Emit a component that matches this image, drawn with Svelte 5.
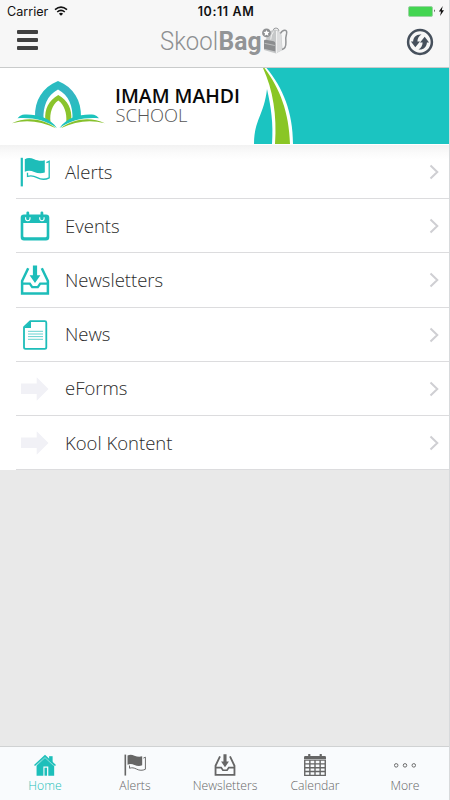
<script>
  const items = [
    { label: 'Alerts', icon: 'flag' },
    { label: 'Events', icon: 'event' },
    { label: 'Newsletters', icon: 'inbox' },
    { label: 'News', icon: 'page' },
    { label: 'eForms', icon: 'arrow' },
    { label: 'Kool Kontent', icon: 'arrow' }
  ];

  const tabs = [
    { label: 'Home', icon: 'home' },
    { label: 'Alerts', icon: 'flag' },
    { label: 'Newsletters', icon: 'inbox' },
    { label: 'Calendar', icon: 'calendar' },
    { label: 'More', icon: 'more' }
  ];

  let active = $state('Home');
</script>

{#snippet icon(name)}
  <svg class="icon" viewBox="0 0 30 30" aria-hidden="true">
    {#if name === 'flag'}
      <path d="M.7 .8h2.200v28.600H.7z" fill="currentColor" />
      <path d="M4.800 2.200c3-1.700 6-1.400 9.400.1 3.600 1.500 7 2 10.600.9v12.300c-3.600 1.200-7 .9-10.600-.6-3.300-1.400-6.400-1.500-9.400-.2z" fill="currentColor" />
      <path d="M26.400 5.600l2.800-1.300v16.500c-4 2-8.200 1.800-12-.2-3.400-1.800-6.500-2.300-9.700-1.200v-3.700" fill="none" stroke="currentColor" stroke-width="1.300" />
    {:else if name === 'event'}
      <path fill-rule="evenodd" d="M4 3.500h22q3.300 0 3.300 3.300v19.500q0 3.300-3.300 3.300H4q-3.300 0-3.300-3.300V6.800Q.7 3.500 4 3.500zM3.300 12v13q0 1.300 1.300 1.300h20.800q1.300 0 1.300-1.300V12z" fill="currentColor" />
      <path d="M7.800 1.800v6M21.900 1.800v6" stroke="currentColor" stroke-width="2.800" stroke-linecap="round" />
      <path d="M5.600 6.200v1.300a2.200 2.200 0 0 0 4.400 0V6.200M19.700 6.200v1.300a2.200 2.200 0 0 0 4.400 0V6.200" fill="none" stroke="#fff" stroke-width="1.100" />
    {:else if name === 'inbox'}
      <path d="M8.200 3.200L2.100 16v12.400h25.800V16L21.800 3.200" fill="none" stroke="currentColor" stroke-width="2.500" />
      <path d="M1.500 18.600h8.300l2.400 3.600h5.600l2.400-3.600h8.300" fill="none" stroke="currentColor" stroke-width="2.300" />
      <path d="M12.900.4h4.200v9.800h3.300L15 18.100l-5.400-7.900h3.300z" fill="currentColor" />
    {:else if name === 'page'}
      <path d="M10.300 1.200h14.500q1.500 0 1.500 1.500v24.500q0 1.600-1.600 1.600H5.600q-1.600 0-1.600-1.600V7.200z" fill="none" stroke="currentColor" stroke-width="1.800" stroke-linejoin="round" />
      <path d="M11 1v7H4z" fill="currentColor" />
      <path d="M8 11.300h15M8 14h15M8 16.600h15M8 19.300h15" stroke="currentColor" stroke-width=".9" opacity=".75" />
    {:else if name === 'arrow'}
      <path d="M1 9.500h15.700V3.300L28.500 15 16.700 26.700v-6.600H1z" fill="#f1f1f6" />
    {:else if name === 'home'}
      <path d="M20.600 3h4.800v9h-4.800z" fill="currentColor" />
      <path d="M15 3.200l12.500 11.700v14.700h-8V17h-6.700v12.600H3.500V15z" fill="currentColor" />
      <path d="M.7 15.700L15 2.300l14.300 13.400" fill="none" stroke="currentColor" stroke-width="2" />
      <path d="M3.100 16L15 4.900 26.900 16" fill="none" stroke="#f9fbfd" stroke-width=".7" />
      <path d="M14.300 18.700h3.500v10.900h-3.500z" fill="currentColor" />
    {:else if name === 'calendar'}
      <path d="M1 8.400h28v20.900H1zM1 13.500h28M1 18.700h28M1 23.900h28M8 8.400v21M15 8.400v21M22 8.400v21" fill="none" stroke="currentColor" stroke-width="1.900" />
      <path d="M0 4.500q0-1.700 1.700-1.700h26.600Q30 2.800 30 4.500v2.400H0z" fill="currentColor" />
      <path d="M7.200.9v4M22.800.9v4" stroke="currentColor" stroke-width="3" stroke-linecap="round" />
    {:else}
      <g fill="none" stroke="currentColor" stroke-width="1.300">
        <circle cx="3" cy="15.500" r="2.400" />
        <circle cx="15" cy="15.500" r="2.400" />
        <circle cx="27" cy="15.500" r="2.400" />
      </g>
    {/if}
  </svg>
{/snippet}

<div class="app">
  <header>
    <div class="status">
      <div class="carrier">
        <span>Carrier</span>
        <svg width="14" height="10" viewBox="0 0 14 10">
          <path d="M1 3.600Q7-1.400 13 3.600M3.200 6Q7 2.800 10.800 6" fill="none" stroke="#111" stroke-width="1.600" />
          <path d="M4.900 7.700Q7 6 9.100 7.700L7 9.800z" fill="#111" />
        </svg>
      </div>
      <span class="time">10:11 AM</span>
      <div class="power">
        <span class="battery"></span>
        <svg width="11" height="10" viewBox="0 0 11 10">
          <path d="M0 3.300q1.800 1.500 0 3z" fill="#333" />
          <path d="M8.700 0L4.900 5.500H7L6.100 10 10 4.200H7.800z" fill="#111" />
        </svg>
      </div>
    </div>

    <nav class="topbar">
      <button class="menu" aria-label="Menu"><i></i><i></i><i></i></button>

      <svg class="brand" width="130" height="34" viewBox="0 0 130 34" role="img">
        <text x="0" y="26" font-size="26" font-weight="300" fill="#8d8f91" textLength="58" lengthAdjust="spacingAndGlyphs">Skool</text>
        <text x="58.500" y="26" font-size="26" font-weight="700" fill="#929496" textLength="43" lengthAdjust="spacingAndGlyphs">Bag</text>
        <!-- backpack -->
        <path d="M113 6.500q.5-2.500 3-2.500t3 3" fill="none" stroke="#999b9d" stroke-width="1" />
        <path d="M106 16q.5-9 8.500-10.500 5.500.5 7 5.500l1 15-6.500 3.500-12-3.500V17z" fill="#c6c8c9" />
        <path d="M116 6.500q4.500 1 5.300 6l.7 13.500-5.500 3z" fill="#dcddde" />
        <path d="M113.500 7.500q-2.500 3-2.800 8M116.500 7v22" stroke="#f4f4f4" stroke-width=".9" fill="none" />
        <path d="M104 17q0-1.500 1.700-1.200l8 1.500q1.600.3 1.600 2v8.200l-11.300-2.700z" fill="#8b8d8f" />
        <path d="M104.500 19.300l10.300 2.200" stroke="#c9caca" stroke-width=".8" />
        <path d="M120.500 9.500q1.700-3.500 4.500-3.300 2.300.3 1.500 3.800-1.200 4-.6 8 .3 6.500-3.900 7.500" fill="none" stroke="#929496" stroke-width="1.500" />
        <circle cx="106.500" cy="8.900" r="4.400" fill="#8f9193" />
        <path d="M106.500 5.900l.9 1.900 2.100.3-1.500 1.500.4 2.100-1.900-1-1.900 1 .4-2.100-1.500-1.500 2.100-.3z" fill="#fff" />
      </svg>

      <button class="refresh" aria-label="Refresh">
        <svg width="28" height="28" viewBox="0 0 28 28">
          <circle cx="14" cy="14" r="11.900" fill="none" stroke="#46505c" stroke-width="2.500" />
          <g fill="#46505c">
            <path d="M15.500 6.600C10.500 6 7.300 9.300 7.100 13.600H4.900l4.400 5.600 4.700-5.600h-2.600c0-2.900 1.400-5.400 4.100-7z" />
            <path d="M12.500 21.400c5 .6 8.200-2.700 8.400-7h2.200l-4.400-5.600-4.700 5.600h2.600c0 2.900-1.400 5.400-4.100 7z" />
          </g>
        </svg>
      </button>
    </nav>
  </header>

  <section class="banner">
    <svg width="450" height="76" viewBox="0 0 450 76">
      <defs>
        <linearGradient id="petal" x1="0" y1="0" x2="1" y2="1">
          <stop offset="0" stop-color="#19c5bd" />
          <stop offset=".5" stop-color="#38b4c4" />
          <stop offset="1" stop-color="#1bc5bc" />
        </linearGradient>
      </defs>
      <!-- arch -->
      <path d="M35 49C34.500 33 42 19.500 58 13c16 6.500 23.500 20 23 36l-8.500 2.500C73 38 69 27.500 58 21.500 47 27.500 43 38 43.500 51.500z" fill="url(#petal)" />
      <path d="M45.300 52C44.500 41 48.500 32.500 58.300 27c9.800 5.500 13.800 14 13 25l-5 1.700C67 45.500 64.500 37 58.300 32.500 52 37 49.500 45.500 50.500 53.700z" fill="#8ac42c" />
      <!-- open book -->
      <path d="M17.500 50.200q2.200-3 5-3.500C36 45.800 49 49 57 60 45 51.500 31 49 17.500 50.200zM99 50.200q-2.200-3-5-3.500C80.500 45.800 67.500 49 59.500 60 71.500 51.500 85.500 49 99 50.200z" fill="#1dc3bd" />
      <path d="M12 55.300C25 49 43 50 56 60.300 41 53 26 51.500 12 55.300zM104.800 55.300C91.800 49 73.800 50 60.800 60.300 75.800 53 90.800 51.500 104.800 55.300z" fill="#86c02c" />
      <text x="115" y="35" class="school" font-weight="600" font-size="19" fill="#090909" textLength="125" lengthAdjust="spacingAndGlyphs">IMAM MAHDI</text>
      <text x="115.500" y="54" class="school" font-weight="300" font-size="19" fill="#555" textLength="72" lengthAdjust="spacingAndGlyphs">SCHOOL</text>
      <path d="M266.500 0H449v76H293C293 44 283 20 266.500 0z" fill="#1bc4c1" />
      <path d="M263 0h1.500C280 21 289 44 290 76h-15C277 47 273 22 263 0z" fill="#8ac625" />
      <path d="M267 21C271 39 273.500 55 272 76h-18C254 52 264 47 267 21z" fill="#1bc4c1" />
    </svg>
  </section>

  <ul class="list">
    {#each items as item}
      <li>
        {@render icon(item.icon)}
        <div class="row">
          <span>{item.label}</span>
          <svg width="10" height="16" viewBox="0 0 10 16">
            <path d="M1.500 1.500L8.300 8l-6.800 6.500" fill="none" stroke="#cfcfd3" stroke-width="2" />
          </svg>
        </div>
      </li>
    {/each}
  </ul>

  <footer>
    {#each tabs as tab}
      <button class:active={active === tab.label} onclick={() => (active = tab.label)}>
        {@render icon(tab.icon)}
        <span>{tab.label}</span>
      </button>
    {/each}
  </footer>
</div>

<style>
  :global(body) {
    margin: 0;
    background: #e9e9e9;
  }

  .app {
    width: 449px;
    height: 800px;
    display: flex;
    flex-direction: column;
    overflow: hidden;
    background: #e9e9e9;
    border-right: 1px solid #d8dadc;
    font-family: 'Open Sans', 'Noto Sans', sans-serif;
  }

  button {
    border: 0;
    padding: 0;
    background: none;
    font-family: inherit;
    cursor: pointer;
  }

  header {
    flex: none;
    box-sizing: border-box;
    height: 68px;
    background: #f7f7f7;
    border-bottom: 1px solid #c9cbcb;
  }

  /* status bar */
  .status {
    display: grid;
    grid-template-columns: 1fr auto 1fr;
    align-items: center;
    height: 22px;
    padding: 0 4px 0 7px;
    font: 12.6px Inter, 'Liberation Sans', sans-serif;
    color: #111;
  }

  .carrier {
    display: flex;
    align-items: center;
    gap: 6px;
  }

  .time {
    font-weight: 600;
    font-size: 12.5px;
    letter-spacing: 0.6px;
  }

  .power {
    display: flex;
    justify-content: flex-end;
    align-items: center;
    gap: 1px;
  }

  .battery {
    box-sizing: border-box;
    width: 25px;
    height: 11px;
    border: 1px solid #9bd3a2;
    border-radius: 2px;
    background: #43d551;
  }

  /* title bar */
  .topbar {
    display: grid;
    grid-template-columns: 1fr auto 1fr;
    align-items: center;
    height: 37px;
    padding: 0 15px 0 17px;
  }

  .menu {
    display: flex;
    flex-direction: column;
    gap: 4px;
    width: 21px;
    margin-top: -1px;
  }

  .menu i {
    height: 4px;
    border-radius: 1px;
    background: #414141;
  }

  .brand {
    margin-right: 1px;
    font-family: Roboto, sans-serif;
  }

  .refresh {
    justify-self: end;
    height: 28px;
    margin-top: 3px;
  }

  .refresh svg {
    display: block;
  }

  .banner {
    flex: none;
    height: 77px;
    background: #fff;
  }

  .banner svg {
    display: block;
    width: 450px;
  }

  .school {
    font-family: 'Open Sans', sans-serif;
  }

  .list {
    flex: none;
    margin: 0;
    padding: 0;
    list-style: none;
    background: linear-gradient(#f2f2f2, #fbfbfb 8px, #fff 15px);
  }

  li {
    display: flex;
    align-items: center;
    height: 54.2px;
    padding-left: 16px;
    position: relative;
  }

  li .icon {
    flex: none;
    width: 30px;
    height: 30px;
    margin: 0 0 0 4px;
    color: #1dbdb9;
  }

  li .row {
    flex: 1;
    display: flex;
    justify-content: space-between;
    align-items: center;
    padding: 0 10px 0 15px;
    font-size: 18.5px;
    font-weight: 300;
    color: #2b2b2b;
  }

  li .row span {
    padding-bottom: 2px;
  }

  li::after {
    content: '';
    position: absolute;
    left: 16px;
    right: 0;
    bottom: 0;
    height: 1px;
    background: #dcdcde;
  }

  /* tab bar */
  footer {
    flex: none;
    display: grid;
    grid-template-columns: repeat(5, 90px);
    box-sizing: border-box;
    height: 54px;
    margin-top: auto;
    padding-top: 7px;
    border-top: 1px solid #d0d2d3;
    background: #f9fbfd;
  }

  footer button {
    display: flex;
    flex-direction: column;
    align-items: center;
    gap: 1px;
    color: #666;
    font-size: 12.2px;
    font-weight: 300;
    line-height: 17px;
  }

  footer .icon {
    width: 22px;
    height: 22px;
  }

  footer .active {
    color: #1dbfba;
  }
</style>
